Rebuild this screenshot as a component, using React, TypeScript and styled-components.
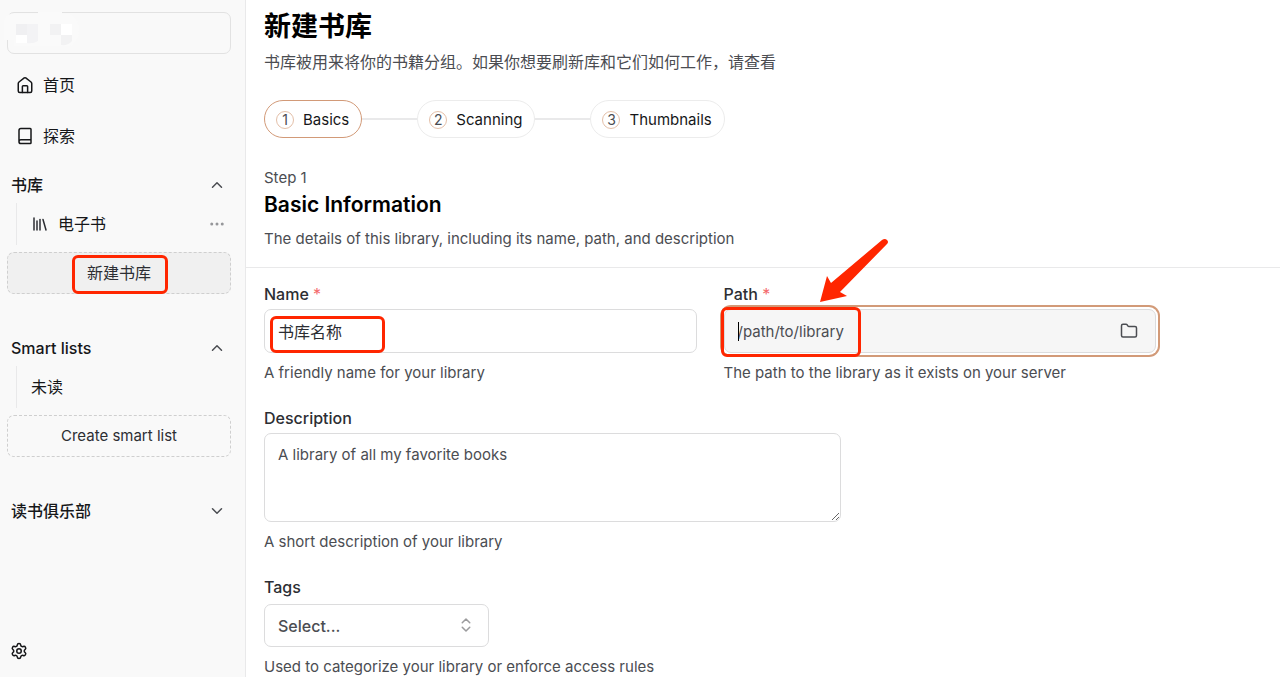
import React from "react";
import styled, { createGlobalStyle, css } from "styled-components";
import { Book, ChevronDown, ChevronUp, ChevronsUpDown, Ellipsis, Folder, Library, Settings } from "lucide-react";

const color = {
  ink: "#161719",
  text: "#2c2e33",
  muted: "#4b4d52",
  line: "#e9e9ea",
  inputLine: "#dcdcdd",
  sidebar: "#f9f9f9",
  brand: "#d29a78",
  mark: "#ff2600",
};

const GlobalStyle = createGlobalStyle`
  *, *::before, *::after { box-sizing: border-box; }
  body {
    margin: 0;
    background: #fff;
    color: ${color.text};
    font-family: Inter, "Noto Sans CJK SC", sans-serif;
    font-size: 16px;
    line-height: 24px;
  }
  h1, h2, p, ul, ol { margin: 0; padding: 0; }
  ul, ol { list-style: none; }
  button, input, textarea, select { font: inherit; color: inherit; }
  button { cursor: pointer; }
`;

const Page = styled.div`
  display: flex;
  min-height: 100vh;
`;

const Sidebar = styled.aside`
  position: sticky;
  top: 0;
  flex: none;
  display: flex;
  flex-direction: column;
  width: 246px;
  height: 100vh;
  padding: 12px 14px 17px 7px;
  background: ${color.sidebar};
  border-right: 1px solid ${color.line};
`;

const UserButton = styled.button`
  position: relative;
  height: 42px;
  flex: none;
  padding: 0;
  background: transparent;
  border: 1px solid #e2e2e2;
  border-radius: 7px;
`;

const Mosaic = styled.svg`
  position: absolute;
  left: -4px;
  top: -1px;
`;

const Nav = styled.nav`
  display: flex;
  flex-direction: column;
  gap: 9px;
  margin-top: 10px;
`;

const NavLink = styled.a`
  display: flex;
  align-items: center;
  gap: 9px;
  height: 42px;
  padding: 0 9px;
  color: ${color.ink};
  text-decoration: none;
`;

const Section = styled.section<{ $top: number }>`
  display: flex;
  flex-direction: column;
  margin-top: ${(p) => p.$top}px;
`;

const SectionToggle = styled.button`
  display: flex;
  align-items: center;
  justify-content: space-between;
  height: 36px;
  padding: 0 5px 0 4px;
  background: none;
  border: 0;
  color: ${color.ink};
  font-weight: 500;
`;

const Branch = styled.ul`
  margin: 0 0 7px 9px;
  border-left: 1px solid ${color.line};
`;

const BranchItem = styled.li`
  display: flex;
  align-items: center;
  justify-content: space-between;
  height: 42px;
  padding: 0 5px 0 14px;
`;

const BranchLink = styled.a`
  display: flex;
  align-items: center;
  gap: 9px;
  color: ${color.ink};
  text-decoration: none;
`;

const MoreButton = styled.button`
  display: flex;
  padding: 0;
  border: 0;
  background: none;
  color: #96979a;
`;

const DashedButton = styled.button<{ $active?: boolean; $compact?: boolean }>`
  position: relative;
  height: 42px;
  padding: 0;
  border: 1px dashed #cfcfcf;
  border-radius: 7px;
  background: ${(p) => (p.$active ? "#f0f0f0" : "transparent")};
  color: ${color.text};
  font-size: ${(p) => (p.$compact ? 15 : 16)}px;
`;

const SettingsButton = styled.button`
  display: flex;
  margin: auto 0 0 3px;
  padding: 0;
  align-self: flex-start;
  border: 0;
  background: none;
  color: ${color.ink};
`;

const Main = styled.main`
  flex: 1;
  min-width: 0;
`;

const Header = styled.header`
  padding: 9px 18px 16px;
  border-bottom: 1px solid ${color.line};
`;

const Title = styled.h1`
  color: #000;
  font-size: 27px;
  line-height: 36px;
  font-weight: 600;
`;

const Lead = styled.p`
  margin-top: 5px;
  color: ${color.muted};
`;

const Steps = styled.ol`
  display: flex;
  align-items: center;
  margin-top: 26px;
`;

const StepItem = styled.li`
  display: flex;
  align-items: center;

  & + &::before {
    content: "";
    width: 55px;
    height: 2px;
    background: ${color.line};
  }
`;

const StepButton = styled.button<{ $current?: boolean }>`
  display: flex;
  align-items: center;
  gap: 9px;
  height: 38px;
  padding: 1px 12px 0 11px;
  border: 1px solid ${(p) => (p.$current ? color.brand : "#ececec")};
  border-radius: 19px;
  background: #fff;
  color: ${color.ink};
  font-size: 15px;
`;

const StepNumber = styled.span`
  display: grid;
  place-items: center;
  width: 18px;
  height: 18px;
  border: 1px solid #e4bfa8;
  border-radius: 50%;
  color: ${color.muted};
  font-size: 14px;
  line-height: 16px;
`;

const Eyebrow = styled.p`
  margin-top: 28px;
  color: ${color.muted};
  font-size: 15px;
`;

const StepTitle = styled.h2`
  margin-top: 1px;
  color: #000;
  font-size: 21px;
  line-height: 28px;
  font-weight: 600;
`;

const StepLead = styled.p`
  margin-top: 8px;
  color: ${color.muted};
  font-size: 15px;
`;

const Form = styled.form`
  display: flex;
  flex-direction: column;
  gap: 21px;
  max-width: 928px;
  padding: 14px 18px 0;
`;

const FieldRow = styled.div`
  display: grid;
  grid-template-columns: 1fr 1fr;
  gap: 27px;
`;

const Field = styled.div<{ $width?: number }>`
  display: flex;
  flex-direction: column;
  max-width: ${(p) => (p.$width ? `${p.$width}px` : "none")};
`;

const Label = styled.label`
  margin-bottom: 3px;
  font-weight: 500;
`;

const Required = styled.span`
  color: #f4696b;
  font-weight: 400;
`;

const Hint = styled.p`
  margin-top: 8px;
  color: ${color.muted};
  font-size: 15px;
  white-space: nowrap;
`;

const Control = styled.div`
  position: relative;
  display: flex;
`;

const SelectControl = styled(Control)`
  margin-top: 2px;
`;

const box = css`
  width: 100%;
  border: 1px solid ${color.inputLine};
  border-radius: 7px;
  background: #fff;
  outline: none;
  &::placeholder { color: ${color.muted}; font-size: 15px; opacity: 1; }
`;

const TextInput = styled.input<{ $focused?: boolean }>`
  ${box}
  height: 44px;
  padding: 0 13px;
  ${(p) =>
    p.$focused &&
    css`
      background: #f6f6f6;
      box-shadow: 0 0 0 2px #fff, 0 0 0 4px ${color.brand};
    `}
`;

const TextArea = styled.textarea`
  ${box}
  display: block;
  height: 89px;
  padding: 9px 13px;
  resize: both;
`;

const Select = styled.select`
  ${box}
  appearance: none;
  height: 43px;
  padding: 0 13px;
  color: ${color.muted};
  font-weight: 500;
`;

const Caret = styled.span`
  position: absolute;
  left: 14px;
  top: 13px;
  width: 1px;
  height: 19px;
  background: #000;
`;

const BrowseButton = styled.button`
  position: absolute;
  right: 18px;
  top: 13px;
  display: flex;
  padding: 0;
  border: 0;
  background: none;
  color: ${color.muted};
`;

const SelectIcon = styled.span`
  position: absolute;
  right: 14px;
  top: 12px;
  display: flex;
  color: #9b9b9d;
  pointer-events: none;
`;

const Marker = styled.span<{ $x: number; $y: number; $w: number; $h: number }>`
  position: absolute;
  left: ${(p) => p.$x}px;
  top: ${(p) => p.$y}px;
  width: ${(p) => p.$w}px;
  height: ${(p) => p.$h}px;
  border: 3px solid ${color.mark};
  border-radius: 6px;
  pointer-events: none;
`;

const Arrow = styled.svg`
  position: absolute;
  left: 96px;
  top: -71px;
  pointer-events: none;
`;

const HomeIcon = () => (
  <svg width="18" height="18" viewBox="0 0 24 24" fill="none" stroke="currentColor" strokeWidth="2" strokeLinecap="round" strokeLinejoin="round" aria-hidden="true">
    <path d="M3 10 Q3 9 4 8 L11 2.6 Q12 2 13 2.6 L20 8 Q21 9 21 10 V20 Q21 22 19 22 H5 Q3 22 3 20 Z" />
    <path d="M8.5 22 V14 Q8.5 13 9.5 13 H14.5 Q15.5 13 15.5 14 V22" />
  </svg>
);

const steps = ["Basics", "Scanning", "Thumbnails"];

export default function App() {
  return (
    <>
      <GlobalStyle />
      <Page>
        <Sidebar>
          <UserButton type="button" aria-label="Account">
            <Mosaic width="76" height="36" viewBox="4 12 76 36" aria-hidden="true">
              <path fill="#fafafa" d="M4 22Q4 14 12 14H38V12H62V14H70Q79 18 79 30T70 46H14V40H4Z" />
              <path fill="#f0f0f2" d="M16 24h11v11H16z" />
              <path fill="#f3f3f5" d="M27 24h11v17q-5 3-11 2z" />
              <path fill="#fff" d="M16 35h11v8H16zM61 24h11v11H61z" />
              <path fill="#f2f2f3" d="M50 24h11v11H50zM61 35h11v6q-4 5-11 4z" />
            </Mosaic>
          </UserButton>
          <Nav>
            <NavLink href="#home"><HomeIcon />首页</NavLink>
            <NavLink href="#explore"><Book size={18} />探索</NavLink>
          </Nav>
          <Section $top={10}>
            <SectionToggle type="button" aria-expanded="true">书库<ChevronUp size={18} color={color.muted} /></SectionToggle>
            <Branch>
              <BranchItem>
                <BranchLink href="#ebooks"><Library size={18} color={color.text} />电子书</BranchLink>
                <MoreButton type="button" aria-label="More"><Ellipsis size={18} /></MoreButton>
              </BranchItem>
            </Branch>
            <DashedButton type="button" $active>
              新建书库
              <Marker $x={64} $y={2} $w={96} $h={39} />
            </DashedButton>
          </Section>
          <Section $top={36}>
            <SectionToggle type="button" aria-expanded="true">Smart lists<ChevronUp size={18} color={color.muted} /></SectionToggle>
            <Branch>
              <BranchItem><BranchLink href="#unread">未读</BranchLink></BranchItem>
            </Branch>
            <DashedButton type="button" $compact>Create smart list</DashedButton>
          </Section>
          <Section $top={36}>
            <SectionToggle type="button" aria-expanded="false">读书俱乐部<ChevronDown size={18} color={color.muted} /></SectionToggle>
          </Section>
          <SettingsButton type="button" aria-label="Settings"><Settings size={18} /></SettingsButton>
        </Sidebar>
        <Main>
          <Header>
            <Title>新建书库</Title>
            <Lead>书库被用来将你的书籍分组。如果你想要刷新库和它们如何工作，请查看</Lead>
            <Steps>
              {steps.map((name, i) => (
                <StepItem key={name}>
                  <StepButton type="button" $current={i === 0}>
                    <StepNumber>{i + 1}</StepNumber>
                    {name}
                  </StepButton>
                </StepItem>
              ))}
            </Steps>
            <Eyebrow>Step 1</Eyebrow>
            <StepTitle>Basic Information</StepTitle>
            <StepLead>The details of this library, including its name, path, and description</StepLead>
          </Header>
          <Form>
            <FieldRow>
              <Field>
                <Label htmlFor="name">Name <Required>*</Required></Label>
                <Control>
                  <TextInput id="name" defaultValue="书库名称" />
                  <Marker $x={6} $y={7} $w={115} $h={37} />
                </Control>
                <Hint>A friendly name for your library</Hint>
              </Field>
              <Field>
                <Label htmlFor="path">Path <Required>*</Required></Label>
                <Control>
                  <TextInput id="path" placeholder="/path/to/library" $focused />
                  <Caret />
                  <BrowseButton type="button" aria-label="Browse"><Folder size={18} /></BrowseButton>
                  <Marker $x={-3} $y={-2} $w={140} $h={50} />
                  <Arrow width="70" height="66" viewBox="0 0 70 66" aria-hidden="true">
                    <path fill={color.mark} d="M0 64 L7 38 L11 45 L62 2 Q65 0 67 2 Q69 4 67 6 L20 54 L27 58 Z" />
                  </Arrow>
                </Control>
                <Hint>The path to the library as it exists on your server</Hint>
              </Field>
            </FieldRow>
            <Field $width={577}>
              <Label htmlFor="description">Description</Label>
              <TextArea id="description" placeholder="A library of all my favorite books" />
              <Hint>A short description of your library</Hint>
            </Field>
            <Field $width={225}>
              <Label htmlFor="tags">Tags</Label>
              <SelectControl>
                <Select id="tags"><option>Select...</option></Select>
                <SelectIcon><ChevronsUpDown size={18} /></SelectIcon>
              </SelectControl>
              <Hint>Used to categorize your library or enforce access rules</Hint>
            </Field>
          </Form>
        </Main>
      </Page>
    </>
  );
}
